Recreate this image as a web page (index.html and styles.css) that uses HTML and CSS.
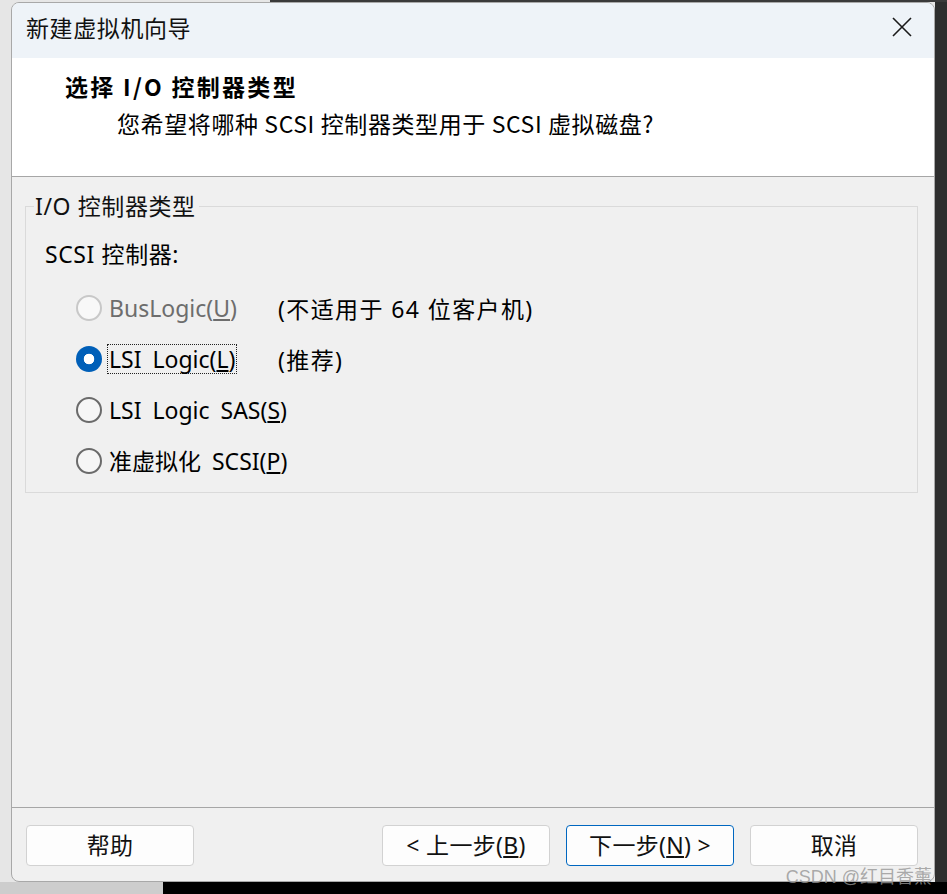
FILE: index.html
```html
<!DOCTYPE html>
<html lang="zh-CN">
<head>
<meta charset="utf-8">
<title>新建虚拟机向导</title>
<link rel="stylesheet" href="styles.css">
</head>
<body>
<div class="desktop">
  <div class="window">
    <div class="titlebar">
      <span class="title">新建虚拟机向导</span>
      <svg class="close" width="20" height="20" viewBox="0 0 20 20"><path d="M1 1 L19 19 M19 1 L1 19" stroke="#1a1a1a" stroke-width="1.6" fill="none"/></svg>
    </div>
    <div class="header">
      <div class="h-title">选择 I/O 控制器类型</div>
      <div class="h-sub">您希望将哪种 SCSI 控制器类型用于 SCSI 虚拟磁盘?</div>
    </div>
    <div class="content">
      <fieldset class="group">
        <legend>I/O 控制器类型</legend>
        <div class="subhead">SCSI 控制器:</div>
        <div class="row disabled">
          <span class="radio"></span>
          <span class="cell"><span class="label">BusLogic(<u>U</u>)</span></span>
          <span class="note">(不适用于 64 位客户机)</span>
        </div>
        <div class="row">
          <span class="radio checked"></span>
          <span class="cell"><span class="label focus">LSI Logic(<u>L</u>)</span></span>
          <span class="note">(推荐)</span>
        </div>
        <div class="row">
          <span class="radio"></span>
          <span class="cell"><span class="label">LSI Logic SAS(<u>S</u>)</span></span>
        </div>
        <div class="row">
          <span class="radio"></span>
          <span class="cell"><span class="label">准虚拟化 SCSI(<u>P</u>)</span></span>
        </div>
      </fieldset>
    </div>
    <div class="footer">
      <button class="btn">帮助</button>
      <span class="spacer"></span>
      <button class="btn">&lt; 上一步(<u>B</u>)</button>
      <button class="btn primary">下一步(<u>N</u>) &gt;</button>
      <button class="btn">取消</button>
    </div>
  </div>
  <div class="bottom-strip"><span class="bs-left"></span><span class="bs-right"></span></div>
  <div class="watermark">CSDN @红目香薰</div>
</div>
</body>
</html>
```

FILE: styles.css
```css
* { box-sizing: border-box; }
html, body { margin: 0; padding: 0; }
body {
  width: 947px;
  height: 894px;
  overflow: hidden;
  font-family: "Noto Sans", "Noto Sans CJK SC", sans-serif;
  color: #000;
}
.desktop {
  position: relative;
  width: 947px;
  height: 894px;
  padding: 2px 12px 0 11px;
  background:
    linear-gradient(to right, #e6e6e6 0, #e6e6e6 270px, #3a3a3a 270px, #3a3a3a 100%) top / 100% 2px no-repeat,
    linear-gradient(to right, #e6e6e6 0, #e6e6e6 935px, #2e2e2e 935px, #2e2e2e 100%);
  display: flex;
  flex-direction: column;
}
.window {
  width: 924px;
  height: 880px;
  border: 1px solid #a8a8a8;
  border-radius: 8px;
  background: #f0f0f0;
  display: flex;
  flex-direction: column;
  overflow: hidden;
  flex: none;
}
.titlebar {
  height: 55px;
  background: #eef3f8;
  display: flex;
  align-items: center;
  justify-content: space-between;
  padding: 0 22px 7px 14px;
}
.title {
  font-family: "Noto Sans CJK SC", sans-serif;
  font-size: 23px;
  letter-spacing: 0.6px;
  color: #111;
}
.close { display: block; }
.header {
  height: 119px;
  background: #fff;
  border-bottom: 1px solid #a6a6a6;
  padding: 11px 0 0 53px;
}
.h-title {
  font-family: "Noto Sans CJK SC", sans-serif;
  font-weight: 700;
  font-size: 23px;
  letter-spacing: 2.3px;
  line-height: 34px;
}
.h-sub {
  font-family: "Noto Sans CJK SC", sans-serif;
  font-size: 23px;
  letter-spacing: 0.6px;
  line-height: 34px;
  margin-top: 3px;
  padding-left: 52px;
}
.content {
  flex: 1;
  padding: 15px 16px 0 13px;
}
.group {
  margin: 0;
  height: 301px;
  border: 1px solid #dadada;
  padding: 0 0 0 19px;
}
.group legend {
  margin-left: -11px;
  padding: 0 3px 0 1px;
  font-size: 23px;
  letter-spacing: 0.6px;
  line-height: 28px;
  color: #111;
}
.subhead {
  font-size: 23px;
  letter-spacing: 0.6px;
  line-height: 30px;
  margin-top: 19px;
}
.row {
  display: flex;
  align-items: center;
  height: 51px;
  padding-left: 31px;
  font-size: 23px;
  white-space: nowrap;
}
.subhead + .row { margin-top: 13px; }
.radio {
  width: 26px;
  height: 26px;
  border-radius: 50%;
  border: 2px solid #6a6a6a;
  background: #f6f6f6;
  flex: none;
  margin-right: 5px;
}
.radio.checked {
  border: none;
  background: radial-gradient(circle, #fff 0, #fff 5px, #005fb8 5.6px);
}
.cell { min-width: 171px; flex: none; }
.label {
  display: inline-block;
  padding: 0 1px;
  line-height: 28px;
  word-spacing: 5px;
  border: 1px dotted transparent;
}
.label.focus { border-color: #222; }
.note { letter-spacing: 1.4px; }
.disabled .radio { border-color: #c8c8c8; background: #f8f8f8; }
.disabled .label { color: #6d6d6d; }
.footer {
  height: 74px;
  border-top: 1px solid #a6a6a6;
  display: flex;
  align-items: flex-start;
  gap: 16px;
  padding: 17px 16px 0 14px;
}
.spacer { flex: 1; }
.btn {
  width: 168px;
  height: 41px;
  background: #fdfdfd;
  border: 1px solid #d2d2d2;
  border-radius: 4px;
  font-family: "Noto Sans", "Noto Sans CJK SC", sans-serif;
  font-size: 23px;
  letter-spacing: 0.3px;
  color: #111;
  padding: 0 0 3px;
}
.btn.primary { border-color: #0067c0; }
.watermark {
  position: absolute;
  right: 15px;
  top: 862px;
  font-family: "Liberation Sans", "Noto Sans CJK SC", sans-serif;
  font-size: 18px;
  color: rgba(150,150,150,0.8);
}
.bottom-strip {
  flex: 1;
  display: flex;
  margin: 0 -12px 0 -11px;
}
.bs-left { width: 163px; background: #cdcdcd; }
.bs-right { flex: 1; background: #000; }
```
